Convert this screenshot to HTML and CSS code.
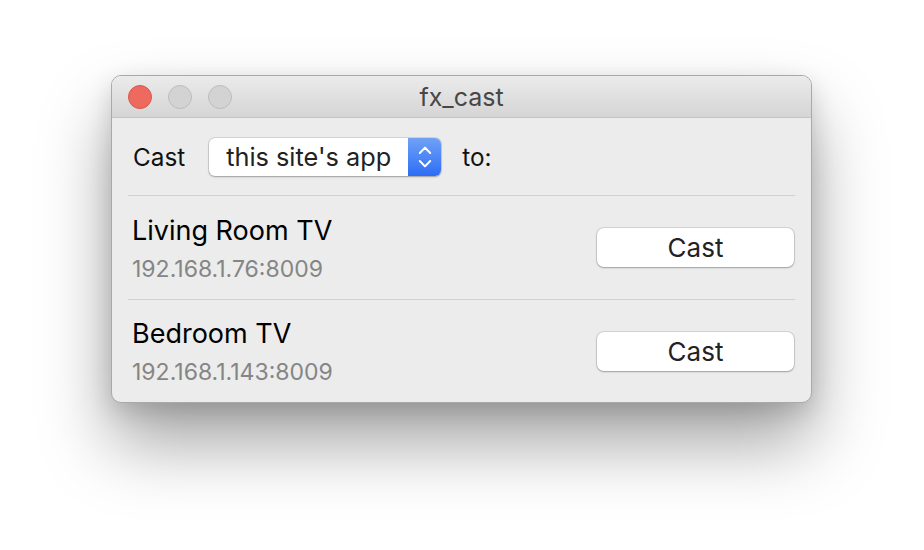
FILE: index.html
```html
<!DOCTYPE html>
<html>
<head>
<meta charset="utf-8">
<title>fx_cast</title>
<link rel="stylesheet" href="styles.css">
</head>
<body>
<div class="desktop">
  <div class="window">
    <div class="titlebar">
      <div class="lights">
        <span class="light close"></span>
        <span class="light"></span>
        <span class="light"></span>
      </div>
      <div class="title">fx_cast</div>
    </div>
    <div class="content">
      <div class="header">
        <span class="label">Cast</span>
        <div class="select">
          <span class="select-text">this site's app</span>
          <span class="select-arrows">
            <svg width="14" height="24" viewBox="0 0 14 24">
              <path d="M1.8 8 L7 2.6 L12.2 8" fill="none" stroke="#fff" stroke-width="2" stroke-linecap="round" stroke-linejoin="round"/>
              <path d="M1.8 16 L7 21.4 L12.2 16" fill="none" stroke="#fff" stroke-width="2" stroke-linecap="round" stroke-linejoin="round"/>
            </svg>
          </span>
        </div>
        <span class="label to">to:</span>
      </div>
      <div class="divider"></div>
      <div class="device">
        <div class="info">
          <div class="name">Living Room TV</div>
          <div class="addr">192.168.1.76:8009</div>
        </div>
        <button class="cast-btn">Cast</button>
      </div>
      <div class="divider"></div>
      <div class="device last">
        <div class="info">
          <div class="name">Bedroom TV</div>
          <div class="addr">192.168.1.143:8009</div>
        </div>
        <button class="cast-btn">Cast</button>
      </div>
    </div>
  </div>
</div>
</body>
</html>
```

FILE: styles.css
```css
* { box-sizing: border-box; }

html, body {
  margin: 0;
  padding: 0;
  background: #ffffff;
  width: 924px;
  height: 550px;
  overflow: hidden;
  font-family: "Inter", "Roboto", "Liberation Sans", sans-serif;
}

.desktop {
  padding: 75px 0 0 111px;
}

.window {
  width: 701px;
  border: 1px solid #a9a9a9;
  border-radius: 10px;
  background: #ececec;
  overflow: hidden;
  box-shadow: 0 40px 70px rgba(0, 0, 0, 0.36), 0 8px 24px rgba(0, 0, 0, 0.14);
}

.titlebar {
  height: 42px;
  border-bottom: 1px solid #c4c4c4;
  background: linear-gradient(#ebebeb, #d5d5d5);
  display: flex;
  align-items: center;
  position: relative;
  padding-left: 16px;
}

.lights {
  display: flex;
  gap: 16px;
}

.light {
  width: 24px;
  height: 24px;
  border-radius: 50%;
  background: #d3d3d3;
  border: 1px solid #bcbcbc;
}

.light.close {
  background: #ee6a5f;
  border-color: #d8574c;
}

.title {
  position: absolute;
  left: 0;
  right: 0;
  top: 0;
  bottom: 0;
  display: flex;
  align-items: center;
  justify-content: center;
  font-size: 25px;
  color: #474747;
  padding-top: 1px;
}

.content {
  display: flex;
  flex-direction: column;
}

.header {
  height: 77px;
  display: flex;
  align-items: center;
  padding-left: 21px;
}

.label {
  font-size: 24.3px;
  color: #111;
}

.select {
  margin-left: 24px;
  width: 232px;
  height: 38px;
  border-radius: 6px;
  background: #fff;
  box-shadow: 0 0 0 1px rgba(0, 0, 0, 0.1), 0 1px 2px rgba(0, 0, 0, 0.25);
  display: flex;
  align-items: center;
  overflow: hidden;
}

.select-text {
  flex: 1;
  padding-left: 17px;
  font-size: 25.3px;
  color: #222;
  white-space: nowrap;
}

.select-arrows {
  width: 33px;
  height: 100%;
  background: linear-gradient(#71a2f7, #2c6df5);
  display: flex;
  align-items: center;
  justify-content: center;
}

.select-arrows svg { display: block; }

.to {
  margin-left: 21px;
}

.divider {
  height: 1px;
  margin: 0 16px;
  background: #d1d1d1;
}

.device {
  height: 103px;
  display: flex;
  align-items: center;
  justify-content: space-between;
  padding: 0 16px 0 20px;
}

.device.last {
  height: 102px;
}

.info {
  display: flex;
  flex-direction: column;
  gap: 8px;
}

.name {
  font-size: 27px;
  color: #000;
  line-height: 34px;
}

.addr {
  font-size: 23px;
  color: #858585;
  line-height: 26px;
}

.cast-btn {
  width: 197px;
  height: 39px;
  border: none;
  border-radius: 7px;
  background: #fff;
  box-shadow: 0 0 0 1px rgba(0, 0, 0, 0.1), 0 1px 2px rgba(0, 0, 0, 0.25);
  font-family: inherit;
  font-size: 26px;
  color: #222;
  padding: 0;
  margin-right: 1px;
}
```
